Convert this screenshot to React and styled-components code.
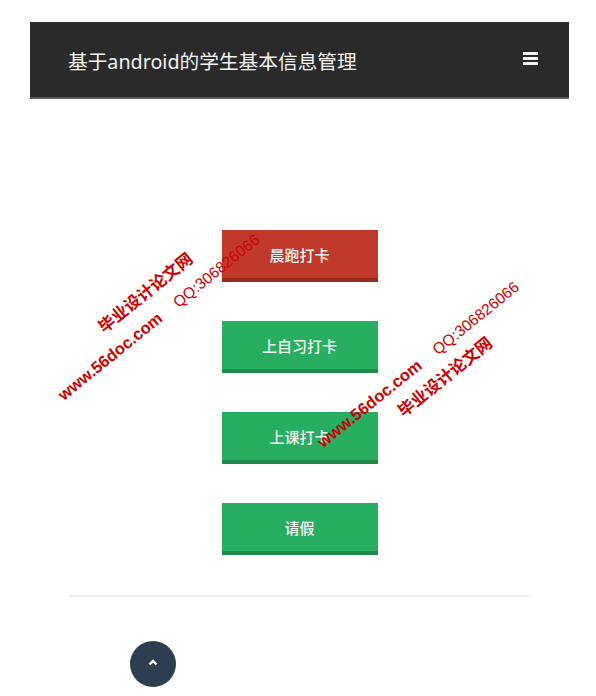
import React from 'react'
import styled, { createGlobalStyle } from 'styled-components'

const GlobalStyle = createGlobalStyle`
  html, body {
    margin: 0;
    padding: 0;
    background: #ffffff;
    font-family: "Noto Sans", "Noto Sans CJK SC", sans-serif;
  }
`;

const Page = styled.div`
  position: relative;
  width: 596px;
  min-height: 696px;
  overflow: hidden;
`;

const Container = styled.div`
  margin: 22px 27px 0 30px;
`;

const Header = styled.header`
  height: 75px;
  background: #2a2a2a;
  border-bottom: 2px solid #5c5c5c;
  display: flex;
  align-items: center;
  justify-content: space-between;
  padding: 0 31px 0 38px;
`;

const Title = styled.h1`
  margin: 0;
  font-size: 19.7px;
  font-weight: 400;
  color: #f4f4f4;
  letter-spacing: 0;
  padding-top: 2px;
`;

const MenuIcon = styled.svg`
  display: block;
  width: 15px;
  height: 13px;
  margin-top: -2px;
`;

const Main = styled.main`
  padding-top: 131px;
  display: flex;
  flex-direction: column;
  align-items: center;
  gap: 39px;
`;

const colors = {
  red: { bg: '#c1392b', edge: '#962b20' },
  green: { bg: '#27ae60', edge: '#1f8a4b' },
};

const ActionButton = styled.button`
  width: 156px;
  height: 52px;
  border: none;
  border-radius: 0;
  border-bottom: 4px solid ${p => colors[p.$tone].edge};
  background: ${p => colors[p.$tone].bg};
  color: #f3f3f3;
  font-family: "Noto Sans CJK SC", sans-serif;
  font-size: 15px;
  font-weight: 500;
  cursor: pointer;
  padding: 0;
`;

const Divider = styled.hr`
  margin: 40px 39px 0 39px;
  border: none;
  border-top: 2px solid #ececec;
`;

const Footer = styled.div`
  padding: 44px 0 0 100px;
`;

const TopButton = styled.button`
  width: 46px;
  height: 46px;
  border-radius: 50%;
  border: none;
  background: #2c3e50;
  display: flex;
  align-items: center;
  justify-content: center;
  padding: 0;
  cursor: pointer;

  svg {
    margin-top: -3px;
  }
`;

const Watermark = styled.div`
  position: absolute;
  left: ${p => p.$x}px;
  top: ${p => p.$y}px;
  transform-origin: 0 0;
  transform: rotate(-39deg);
  color: #cc0000;
  white-space: nowrap;
  pointer-events: none;
`;

const MarkLine = styled.div`
  display: flex;
  align-items: baseline;
  height: 20px;
  line-height: 20px;
  margin-top: ${p => p.$gap || 0}px;
  padding-left: ${p => p.$indent || 0}px;
`;

const Site = styled.span`
  font-family: "Liberation Sans", sans-serif;
  font-weight: 700;
  font-size: 16.5px;
`;

const QQ = styled.span`
  font-family: "Liberation Sans", sans-serif;
  font-size: 15.5px;
  margin-left: 19px;
`;

const Brand = styled.span`
  font-family: "Noto Sans CJK SC", sans-serif;
  font-weight: 700;
  font-size: 16.5px;
`;

function App() {
  return (
    <Page>
      <GlobalStyle />
      <Container>
        <Header>
          <Title>基于android的学生基本信息管理</Title>
          <MenuIcon viewBox="0 0 15 13">
            <rect x="0" y="0" width="15" height="3" fill="#f2f2f2" />
            <rect x="0" y="5" width="15" height="3" fill="#f2f2f2" />
            <rect x="0" y="10" width="15" height="3" fill="#f2f2f2" />
          </MenuIcon>
        </Header>
        <Main>
          <ActionButton $tone="red">晨跑打卡</ActionButton>
          <ActionButton $tone="green">上自习打卡</ActionButton>
          <ActionButton $tone="green">上课打卡</ActionButton>
          <ActionButton $tone="green">请假</ActionButton>
        </Main>
        <Divider />
        <Footer>
          <TopButton aria-label="top">
            <svg width="10" height="7" viewBox="0 0 10 7">
              <polyline points="1.5,5.5 5,2 8.5,5.5" fill="none" stroke="#ffffff" strokeWidth="2.4" />
            </svg>
          </TopButton>
        </Footer>
      </Container>

      <Watermark $x={36} $y={367}>
        <MarkLine $indent={74}><Brand>毕业设计论文网</Brand></MarkLine>
        <MarkLine $gap={8}><Site>www.56doc.com</Site><QQ>QQ:306826066</QQ></MarkLine>
      </Watermark>

      <Watermark $x={313} $y={436}>
        <MarkLine><Site>www.56doc.com</Site><QQ>QQ:306826066</QQ></MarkLine>
        <MarkLine $gap={6} $indent={82}><Brand>毕业设计论文网</Brand></MarkLine>
      </Watermark>
    </Page>
  );
}

export default App;
